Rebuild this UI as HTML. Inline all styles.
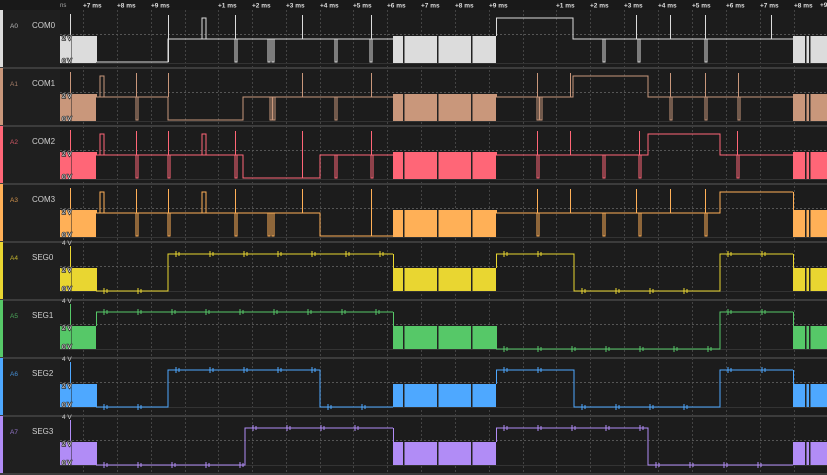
<!DOCTYPE html>
<html><head><meta charset="utf-8"><style>
body{margin:0;background:#1c1c1c;width:827px;height:475px;overflow:hidden;font-family:"Liberation Sans",sans-serif}
svg{display:block}
</style></head><body>
<svg id="s" width="827" height="475" xmlns="http://www.w3.org/2000/svg"></svg>
<script>
const S=document.getElementById('s');let h='';
h+='<rect x="0" y="0" width="827" height="475" fill="#1c1c1c"/>';
h+='<rect x="0" y="0" width="60" height="475" fill="#1f1f1f"/>';
h+='<rect x="0" y="0" width="827" height="10" fill="#191919"/>';
const grid=[83,117,151,185,218,252,286,320,353,387,421,455,489,523,556,590,624,658,692,726,760,794];
const lab={83:'+7 ms',117:'+8 ms',151:'+9 ms',218:'+1 ms',252:'+2 ms',286:'+3 ms',320:'+4 ms',353:'+5 ms',387:'+6 ms',421:'+7 ms',455:'+8 ms',489:'+9 ms',556:'+1 ms',590:'+2 ms',624:'+3 ms',658:'+4 ms',692:'+5 ms',726:'+6 ms',760:'+7 ms',794:'+8 ms'};
h+='<text x="60" y="7" font-size="6" fill="#aaa">ns</text><text x="820" y="7" font-size="6.5" font-weight="bold" fill="#ddd">+9</text>';
grid.forEach(g=>{h+=`<line x1="${g+.5}" y1="10" x2="${g+.5}" y2="475" stroke="#444" stroke-dasharray="2,2"/>`;if(lab[g])h+=`<text x="${g}" y="7.5" font-size="6.5" font-weight="bold" fill="#ddd">${lab[g]}</text>`;});
const ch=[
['A0','COM0','#dcdcdc'],['A1','COM1','#c9977b'],['A2','COM2','#ff6677'],['A3','COM3','#ffb057'],
['A4','SEG0','#e9d631'],['A5','SEG1','#56c868'],['A6','SEG2','#4ea8ff'],['A7','SEG3','#b18cf6']];
const W=[
{seg:[[96,168,'L'],[168,393,'M'],[496,573,'H'],[573,793,'M']],dip:[235,268,272,335,370,603,638,705],spk:[168,235,302,371,636,670,705,771],pul:[202]},
{seg:[[96,168,'M'],[168,243,'L'],[243,393,'M'],[496,573,'M'],[573,648,'H'],[648,793,'M']],dip:[136,270,273,335,537,540,670,705,738],spk:[136,168,302,371,537,570,670,705,738],pul:[100]},
{seg:[[96,243,'M'],[243,320,'L'],[320,393,'M'],[496,648,'M'],[648,720,'H'],[720,793,'M']],dip:[136,168,235,335,371,537,603,639,737],spk:[136,168,235,302,371,537,570,639,737],pul:[100,202]},
{seg:[[96,320,'M'],[320,393,'L'],[496,720,'M'],[720,793,'H']],dip:[136,168,235,268,272,537,603,639,705],spk:[136,168,235,302,371,537,570,636,670,705],pul:[100,202]},
{seg:[[96,168,'L'],[168,393,'H'],[496,574,'H'],[574,720,'L'],[720,793,'H']],dip:[],spk:[],pul:[]},
{seg:[[96,393,'H'],[496,720,'L'],[720,793,'H']],dip:[],spk:[],pul:[]},
{seg:[[96,168,'L'],[168,320,'H'],[320,393,'L'],[496,574,'H'],[574,720,'L'],[720,793,'H']],dip:[],spk:[],pul:[]},
{seg:[[96,245,'L'],[245,393,'H'],[496,648,'H'],[648,793,'L']],dip:[],spk:[],pul:[]}];
ch.forEach((c,i)=>{
 const T=10+i*58, seg=i>=4;
 const Lv={H:seg?T+12:T+8,M:T+29,L:seg?T+49:T+52};
 const bt=T+26, bb=seg?T+49:T+53;
 h+=`<rect x="0" y="${T}" width="3" height="58" fill="${c[2]}"/>`;
 h+=`<text x="10" y="${T+18}" font-size="6.5" fill="${c[2]}" opacity=".8">${c[0]}</text>`;
 h+=`<text x="32" y="${T+18}" font-size="8" fill="#cfcfcf">${c[1]}</text>`;
 h+=`<line x1="60" y1="${bt-1.5}" x2="827" y2="${bt-1.5}" stroke="#555" stroke-dasharray="2,2"/>`;
 h+=`<line x1="60" y1="${bb+.5}" x2="827" y2="${bb+.5}" stroke="#333"/>`;
 if(seg)h+=`<text x="62" y="${T+3}" font-size="6.5" fill="#ccc">4 V</text>`;
 [[60,96],[393,496],[793,827]].forEach(b=>h+=`<rect x="${b[0]}" y="${bt}" width="${b[1]-b[0]}" height="${bb-bt}" fill="${c[2]}"/>`);
 [70,403,437,471,805,809].forEach(x=>h+=`<rect x="${x}" y="${bt}" width="1.5" height="${bb-bt}" fill="#222"/>`);
 h+=`<line x1="70.5" y1="${T+4}" x2="70.5" y2="${bb}" stroke="${c[2]}"/>`;
 const w=W[i];let d='';
 w.seg.forEach((s,k)=>{const y=Lv[s[2]];d+=(k&&w.seg[k-1][1]===s[0]?'L':'M')+`${s[0]},${y}L${s[1]},${y}`;});
 w.seg.forEach(s=>{const y=Lv[s[2]];if([96,496].includes(s[0]))d+=`M${s[0]+.5},${bt}L${s[0]+.5},${y}`;if([393,793].includes(s[1]))d+=`M${s[1]+.5},${bt}L${s[1]+.5},${y}`;});
 w.dip.forEach(x=>{const lv=w.seg.find(s=>x>=s[0]&&x<=s[1]);if(lv){const y=Lv[lv[2]];d+=`M${x},${y}L${x},${Lv.L}L${x+2},${Lv.L}L${x+2},${y}`;}});
 w.spk.forEach(x=>{const lv=w.seg.find(s=>x>=s[0]&&x<=s[1]);if(lv){d+=`M${x+.5},${Lv[lv[2]]}L${x+.5},${T+5}`;}});
 w.pul.forEach(x=>{d+=`M${x},${Lv.M}L${x},${Lv.H}L${x+4},${Lv.H}L${x+4},${Lv.M}`;});
 if(seg){w.seg.forEach(s=>{for(let x=s[0]+8;x<s[1]-4;x+=34){const y=Lv[s[2]];d+=`M${x},${y-3}L${x},${y+3}M${x+3},${y-2}L${x+3},${y+2}`;}});}
 h+=`<path d="${d}" fill="none" stroke="${c[2]}" stroke-width="1"/>`;
 h+=`<text x="62" y="${bt+4}" font-size="6.5" fill="#eee" stroke="#333" stroke-width="1.5" paint-order="stroke">2 V</text><text x="62" y="${bb}" font-size="6.5" fill="#eee" stroke="#333" stroke-width="1.5" paint-order="stroke">0 V</text>`;
 h+=`<rect x="0" y="${T+57}" width="827" height="2" fill="#3c3c3c"/>`;
});
S.innerHTML=h;
</script>
</body></html>
